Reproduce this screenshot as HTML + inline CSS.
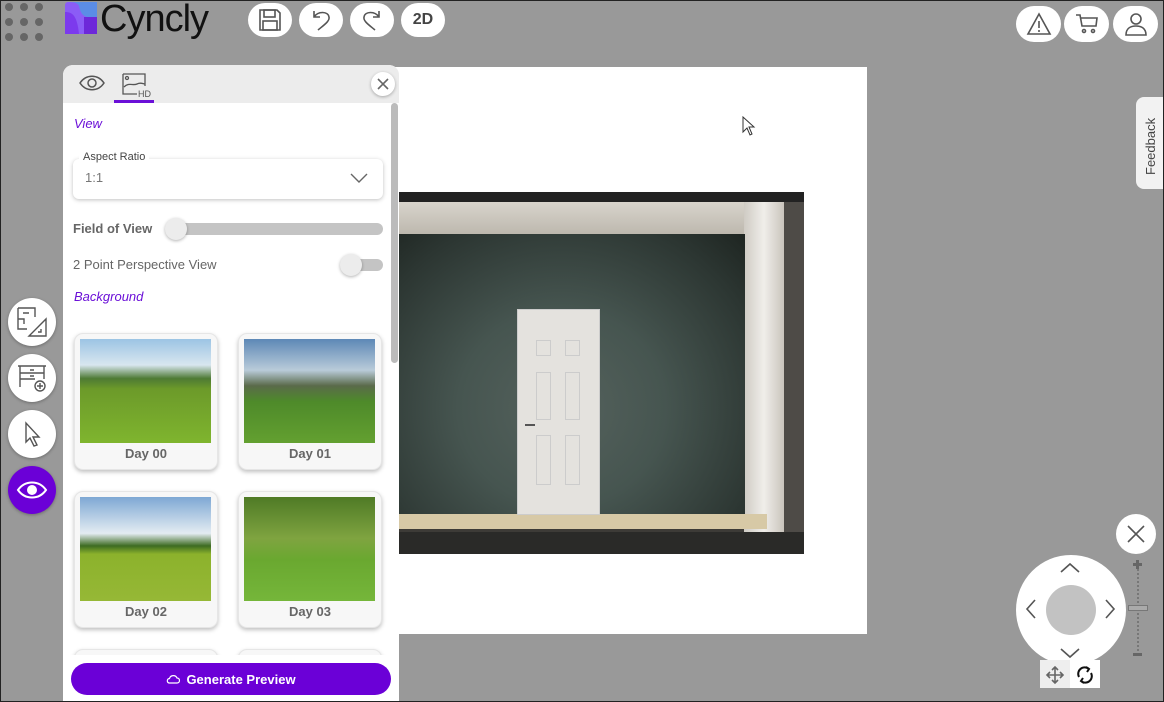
<!DOCTYPE html>
<html style="overflow:hidden"><head><meta charset="utf-8"><style>
*{box-sizing:border-box;margin:0;padding:0}
html,body{width:1164px;height:702px;overflow:hidden}
body{background:#999;position:relative;font-family:"Liberation Sans",sans-serif}
.abs{position:absolute}
.pill{position:absolute;background:#fff;border-radius:50%;display:flex;align-items:center;justify-content:center}
.dot{position:absolute;width:8px;height:8px;border-radius:50%;background:#666}
.card{position:absolute;width:144px;height:137px;background:#f7f7f7;border-radius:9px;box-shadow:0 2px 4px rgba(0,0,0,.25);border:1px solid #e6e6e6}
.card .img{position:absolute;left:5px;top:5px;width:131px;height:104px}
.card span{position:absolute;left:0;right:0;top:112px;text-align:center;font-size:13px;font-weight:bold;color:#666}
.side{position:absolute;left:8px;width:48px;height:48px;border-radius:50%;background:#fff;display:flex;align-items:center;justify-content:center;box-shadow:0 1px 3px rgba(0,0,0,.3)}
</style></head><body>
<div class="dot" style="left:5px;top:3px"></div><div class="dot" style="left:20px;top:3px"></div><div class="dot" style="left:35px;top:3px"></div>
<div class="dot" style="left:5px;top:18px"></div><div class="dot" style="left:20px;top:18px"></div><div class="dot" style="left:35px;top:18px"></div>
<div class="dot" style="left:5px;top:33px"></div><div class="dot" style="left:20px;top:33px"></div><div class="dot" style="left:35px;top:33px"></div>
<svg class="abs" style="left:65px;top:2px" width="32" height="32" viewBox="0 0 32 32"><rect width="32" height="32" rx="3" fill="#8b5cf6"/><path d="M0 0H32V16C20 16 16 14 14 4 12 0 8 0 0 0Z" fill="#5b8de6"/><path d="M0 10C8 10 12 14 14 32H0Z" fill="#7c3aed"/><rect x="19" y="15" width="13" height="17" fill="#6d28d9"/></svg>
<div class="abs" style="left:100px;top:0px;font-size:38px;line-height:38px;color:#111;letter-spacing:-1px">Cyncly</div>
<div class="pill" style="left:248px;top:3px;width:44px;height:34px;border-radius:17px"><svg width="26" height="26" viewBox="0 0 26 26" fill="none" stroke="#555" stroke-width="1.6"><path d="M3 3H20L23 6V23H3Z"/><rect x="7" y="3" width="11" height="7"/><rect x="6" y="14" width="14" height="9"/></svg></div>
<div class="pill" style="left:299px;top:3px;width:44px;height:34px;border-radius:17px"><svg width="26" height="26" viewBox="0 0 26 26" fill="none" stroke="#555" stroke-width="1.6"><path d="M6 4V10H12M6 10C10 4 20 4 21 10 22 14 16 18 10 23"/></svg></div>
<div class="pill" style="left:350px;top:3px;width:44px;height:34px;border-radius:17px"><svg width="26" height="26" viewBox="0 0 26 26" fill="none" stroke="#555" stroke-width="1.6"><path d="M20 4V10H14M20 10C16 4 6 4 5 10 4 14 10 18 16 23"/></svg></div>
<div class="pill" style="left:401px;top:3px;width:44px;height:34px;border-radius:17px;font-size:16px;font-weight:bold;color:#444">2D</div>
<div class="pill" style="left:1016px;top:6px;width:45px;height:36px;border-radius:18px"><svg width="26" height="24" viewBox="0 0 26 24" fill="none" stroke="#555" stroke-width="1.6"><path d="M13 2L24 22H2Z"/><path d="M13 9V16M13 18V20"/></svg></div>
<div class="pill" style="left:1064px;top:6px;width:45px;height:36px;border-radius:18px"><svg width="26" height="24" viewBox="0 0 26 24" fill="none" stroke="#555" stroke-width="1.6"><path d="M2 3H6L8 14H22L23 6H7"/><circle cx="10" cy="19" r="1.5"/><circle cx="19" cy="19" r="1.5"/></svg></div>
<div class="pill" style="left:1113px;top:6px;width:45px;height:36px;border-radius:18px"><svg width="26" height="26" viewBox="0 0 26 26" fill="none" stroke="#555" stroke-width="1.6"><circle cx="13" cy="8" r="5"/><path d="M3 24C3 17 8 15 13 15S23 17 23 24Z"/></svg></div>
<div class="abs" style="left:1136px;top:97px;width:30px;height:92px;background:#f2f2f2;border-radius:8px 0 0 8px"><div style="position:absolute;left:7px;top:78px;transform:rotate(-90deg);transform-origin:0 0;font-size:13px;color:#444;white-space:nowrap">Feedback</div></div>
<!-- canvas -->
<div class="abs" style="left:390px;top:67px;width:477px;height:567px;background:#fff"></div>
<div class="abs" style="left:399px;top:192px;width:405px;height:362px;background:#222;overflow:hidden">
 <div class="abs" style="left:0;top:10px;width:390px;height:332px;background:#3d3b37"></div>
 <div class="abs" style="left:385px;top:10px;width:20px;height:330px;background:#4e4b47"></div>
 <div class="abs" style="left:0;top:10px;width:385px;height:32px;background:linear-gradient(#d8d4cc,#bdb8ae)"></div>
 <div class="abs" style="left:345px;top:10px;width:40px;height:330px;background:linear-gradient(90deg,#cfcbc4,#f0eeea 50%,#c9c4bc)"></div>
 <div class="abs" style="left:0;top:42px;width:346px;height:290px;background:radial-gradient(ellipse at 47% 60%,#55625d 0%,#465550 40%,#2c3632 80%,#1e2521 100%)"></div>
 <div class="abs" style="left:0;top:322px;width:368px;height:15px;background:#d7c9a6"></div>
 <div class="abs" style="left:0;top:340px;width:405px;height:22px;background:#2a2a28"></div>
 <div class="abs" style="left:118px;top:117px;width:83px;height:206px;background:#e4e2de;border:1px solid #ccc"></div>
 <div class="abs" style="left:137px;top:148px;width:15px;height:16px;border:1px solid #ccc"></div><div class="abs" style="left:166px;top:148px;width:15px;height:16px;border:1px solid #ccc"></div>
 <div class="abs" style="left:137px;top:180px;width:15px;height:48px;border:1px solid #ccc"></div><div class="abs" style="left:166px;top:180px;width:15px;height:48px;border:1px solid #ccc"></div>
 <div class="abs" style="left:137px;top:243px;width:15px;height:50px;border:1px solid #ccc"></div><div class="abs" style="left:166px;top:243px;width:15px;height:50px;border:1px solid #ccc"></div>
 <div class="abs" style="left:126px;top:232px;width:10px;height:2px;background:#555"></div>
</div>
<svg class="abs" style="left:742px;top:116px" width="14" height="20" viewBox="0 0 14 20"><path d="M1 1V16L5 12L8 19L10 18L7 11H12Z" fill="#fff" stroke="#333"/></svg>
<!-- panel -->
<div class="abs" style="left:63px;top:65px;width:336px;height:637px;background:#fff;border-radius:10px 10px 0 0;overflow:hidden">
 <div class="abs" style="left:0;top:0;width:336px;height:38px;background:#ececec"></div>
 <svg class="abs" style="left:15px;top:8px" width="28" height="20" viewBox="0 0 28 20" fill="none" stroke="#555" stroke-width="1.5"><path d="M2 10C8 1 20 1 26 10 20 19 8 19 2 10Z"/><circle cx="14" cy="10" r="4"/></svg>
 <svg class="abs" style="left:58px;top:7px" width="30" height="26" viewBox="0 0 30 26" fill="none" stroke="#555" stroke-width="1.3"><path d="M2 2H24V14M2 2V22H16"/><circle cx="6" cy="6" r="1.5"/><path d="M3 15C8 10 12 14 16 12 20 10 22 12 24 12"/><text x="17" y="25" font-size="9" fill="#555" stroke="none" font-family="Liberation Sans">HD</text></svg>
 <div class="abs" style="left:51px;top:35px;width:40px;height:3px;background:#6b10d8"></div>
 <div class="abs" style="left:308px;top:7px;width:24px;height:24px;border-radius:50%;background:#fff;box-shadow:0 1px 3px rgba(0,0,0,.3)"><svg width="24" height="24" viewBox="0 0 24 24" stroke="#666" stroke-width="1.6"><path d="M7 7L17 17M17 7L7 17"/></svg></div>
 <div class="abs" style="left:328px;top:38px;width:7px;height:260px;background:#bbb;border-radius:4px"></div>
 <div class="abs" style="left:11px;top:51px;font-size:13px;font-style:italic;color:#6b10d8">View</div>
 <div class="abs" style="left:10px;top:94px;width:310px;height:40px;background:#fff;border-radius:6px;box-shadow:0 1px 4px rgba(0,0,0,.25)"></div>
 <div class="abs" style="left:16px;top:86px;font-size:11px;color:#444;background:#fff;padding:0 4px">Aspect Ratio</div>
 <div class="abs" style="left:22px;top:105px;font-size:13px;color:#777">1:1</div>
 <svg class="abs" style="left:287px;top:107px" width="18" height="12" viewBox="0 0 18 12" fill="none" stroke="#666" stroke-width="1.4"><path d="M1 2L9 10 17 2"/></svg>
 <div class="abs" style="left:10px;top:156px;font-size:13px;font-weight:bold;color:#666">Field of View</div>
 <div class="abs" style="left:108px;top:158px;width:212px;height:12px;background:#c4c4c4;border-radius:6px"></div>
 <div class="abs" style="left:102px;top:153px;width:22px;height:22px;background:#ececec;border-radius:50%;box-shadow:0 1px 3px rgba(0,0,0,.3)"></div>
 <div class="abs" style="left:10px;top:192px;font-size:13px;color:#666">2 Point Perspective View</div>
 <div class="abs" style="left:282px;top:194px;width:38px;height:12px;background:#c4c4c4;border-radius:6px"></div>
 <div class="abs" style="left:277px;top:189px;width:22px;height:22px;background:#ececec;border-radius:50%;box-shadow:0 1px 3px rgba(0,0,0,.3)"></div>
 <div class="abs" style="left:11px;top:224px;font-size:13px;font-style:italic;color:#6b10d8">Background</div>
 <div class="card" style="left:11px;top:268px"><div class="img" style="background:linear-gradient(#9cc4e4 0%,#d8e6ef 25%,#4e7a34 38%,#6c9a2a 48%,#7fb52e 100%)"></div><span>Day 00</span></div>
 <div class="card" style="left:175px;top:268px"><div class="img" style="background:linear-gradient(#5d88b6 0%,#b9cbd9 30%,#5a6a4a 45%,#4e8a2a 60%,#63a030 100%)"></div><span>Day 01</span></div>
 <div class="card" style="left:11px;top:426px"><div class="img" style="background:linear-gradient(#7ea8d4 0%,#e4ecf2 35%,#3d6b22 47%,#8cb22c 55%,#96b836 100%)"></div><span>Day 02</span></div>
 <div class="card" style="left:175px;top:426px"><div class="img" style="background:linear-gradient(#4f7a26 0%,#7fa440 40%,#6aa830 60%,#75b63a 100%)"></div><span>Day 03</span></div>
 <div class="card" style="left:11px;top:584px"></div><div class="card" style="left:175px;top:584px"></div>
 <div class="abs" style="left:0;top:590px;width:336px;height:50px;background:#fff"></div>
 <div class="abs" style="left:8px;top:598px;width:320px;height:32px;background:#6b00d7;border-radius:16px;color:#fff;font-size:13px;font-weight:bold;display:flex;align-items:center;justify-content:center;gap:6px"><svg width="14" height="10" viewBox="0 0 14 10" fill="none" stroke="#fff" stroke-width="1.2"><path d="M3 9H11A2.5 2.5 0 0 0 11 4 4 4 0 0 0 3.5 4.5 2.3 2.3 0 0 0 3 9Z"/></svg>Generate Preview</div>
</div>
<!-- side buttons -->
<div class="side" style="top:298px"><svg width="34" height="34" viewBox="0 0 34 34" fill="none" stroke="#555" stroke-width="1.4"><path d="M3 3H20V12M3 3V24H12M8 8H14M3 14H9V19"/><path d="M31 14V31H14Z"/><path d="M26 24V27H23"/></svg></div>
<div class="side" style="top:354px"><svg width="34" height="34" viewBox="0 0 34 34" fill="none" stroke="#555" stroke-width="1.4"><path d="M3 5H31M5 5V26M29 5V18M5 12H29M5 18H20"/><path d="M15 9H19M15 15H19"/><circle cx="25" cy="25" r="5"/><path d="M25 22V28M22 25H28"/></svg></div>
<div class="side" style="top:410px"><svg width="30" height="30" viewBox="0 0 30 30" fill="none" stroke="#555" stroke-width="1.4"><path d="M9 4V23L13 19L17 27L20 26L16 18H22Z"/></svg></div>
<div class="side" style="top:466px;background:#6b00d7"><svg width="32" height="22" viewBox="0 0 32 22" fill="none" stroke="#fff" stroke-width="2"><path d="M2 11C9 1 23 1 30 11 23 21 9 21 2 11Z"/><circle cx="16" cy="11" r="4" fill="#fff"/></svg></div>
<!-- nav -->
<div class="pill" style="left:1116px;top:514px;width:40px;height:40px"><svg width="22" height="22" viewBox="0 0 22 22" stroke="#555" stroke-width="1.6"><path d="M3 3L19 19M19 3L3 19"/></svg></div>
<div class="abs" style="left:1016px;top:555px;width:110px;height:110px;border-radius:50%;background:#fff"></div>
<div class="abs" style="left:1046px;top:585px;width:50px;height:50px;border-radius:50%;background:#c2c2c2"></div>
<svg class="abs" style="left:1016px;top:555px" width="110" height="110" viewBox="0 0 110 110" fill="none" stroke="#555" stroke-width="1.6"><path d="M45 17L54 9 63 17M45 94L54 102 63 94M19 45L11 54 19 63M90 45L98 54 90 63"/></svg>
<div class="abs" style="left:1040px;top:660px;width:60px;height:28px;background:#fff"></div>
<div class="abs" style="left:1040px;top:660px;width:30px;height:28px;background:#eee"></div>
<svg class="abs" style="left:1045px;top:665px" width="20" height="20" viewBox="0 0 20 20" fill="none" stroke="#666" stroke-width="1.6"><path d="M10 2V18M2 10H18M7 5L10 2 13 5M7 15L10 18 13 15M5 7L2 10 5 13M15 7L18 10 15 13"/></svg>
<svg class="abs" style="left:1075px;top:665px" width="20" height="20" viewBox="0 0 20 20" fill="none" stroke="#111" stroke-width="2"><path d="M4 12A6.5 6.5 0 0 1 14 4M16 8A6.5 6.5 0 0 1 6 16"/><path d="M11 2L14 4 12 7M9 18L6 16 8 13"/></svg>
<div class="abs" style="left:1137px;top:565px;width:2px;height:90px;background:repeating-linear-gradient(#777 0 2px,transparent 2px 4px)"></div>
<div class="abs" style="left:1133px;top:563px;width:9px;height:3px;background:#666"></div><div class="abs" style="left:1136px;top:560px;width:3px;height:9px;background:#666"></div>
<div class="abs" style="left:1128px;top:605px;width:20px;height:6px;border:1px solid #777;background:#aaa"></div>
<div class="abs" style="left:1133px;top:653px;width:9px;height:3px;background:#666"></div>
<div class="abs" style="left:0;top:0;width:1164px;height:1px;background:#222"></div>
<div class="abs" style="left:0;top:0;width:1px;height:702px;background:#222"></div>
<div class="abs" style="left:0;top:701px;width:1164px;height:1px;background:#222"></div>
<div class="abs" style="left:1163px;top:0;width:1px;height:702px;background:#222"></div>
</body></html>
